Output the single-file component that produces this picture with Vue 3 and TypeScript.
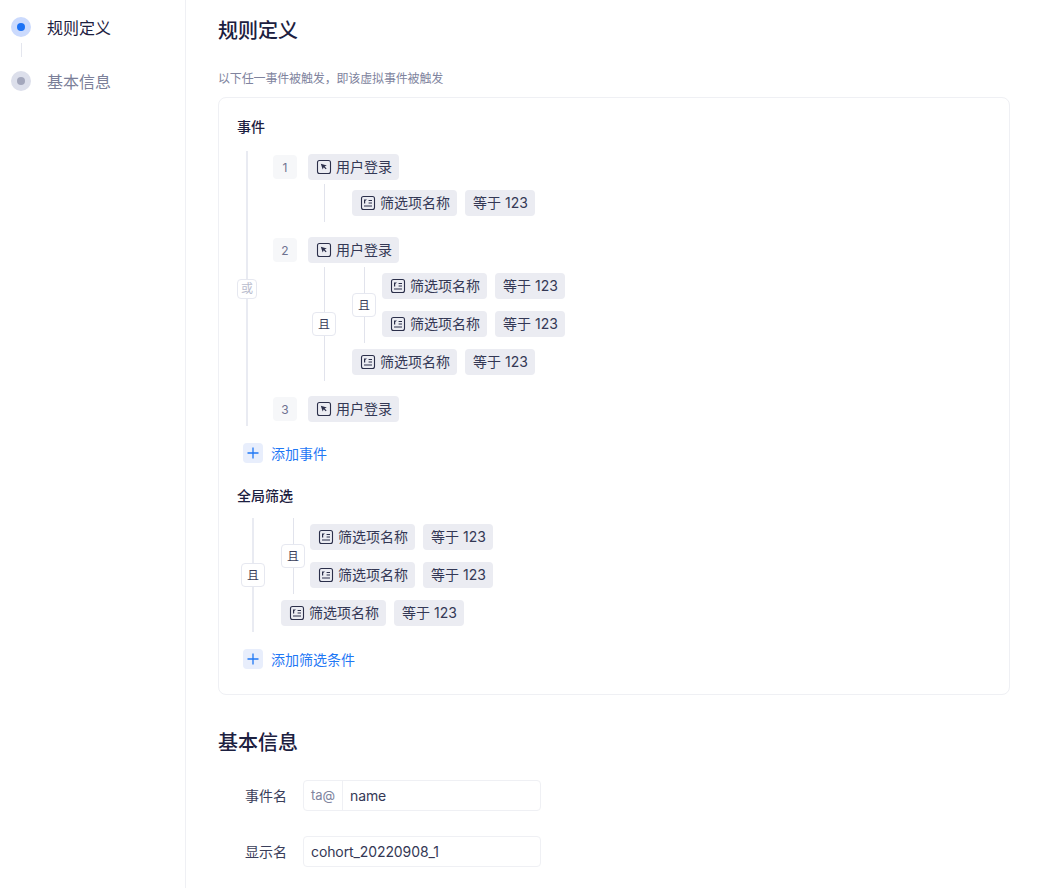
<template>
  <div class="page">
    <aside class="side">
      <div class="step active">
        <span class="step-dot"><i></i></span>
        <span class="step-label">规则定义</span>
      </div>
      <div class="step-line"></div>
      <div class="step">
        <span class="step-dot"><i></i></span>
        <span class="step-label">基本信息</span>
      </div>
    </aside>

    <main class="main">
      <h2 class="title">规则定义</h2>
      <p class="desc">以下任一事件被触发，即该虚拟事件被触发</p>

      <section class="card">
        <h3 class="sub-title">事件</h3>

        <div class="tree events">
          <div class="rail rail-or">
            <span class="line"></span>
            <span class="badge badge-or">或</span>
            <span class="line"></span>
          </div>
          <div class="event-list">
            <!-- 事件 1 -->
            <div class="event">
              <div class="event-head">
                <span class="num">1</span>
                <span class="chip">
                  <svg class="ico" viewBox="0 0 16 16"><rect x="1.5" y="1.5" width="13" height="13" rx="2" fill="none" stroke="currentColor" stroke-width="1.1" /><path d="M4.8 4.8l6 1.6-2.2 1 2 2-.9.9-2-2-1 2.2z" fill="currentColor" /></svg>
                  用户登录
                </span>
              </div>
              <div class="tree conds">
                <div class="rail"><span class="line"></span></div>
                <div class="cond-list">
                  <div class="cond">
                    <span class="chip">
                      <svg class="ico" viewBox="0 0 16 16"><rect x="1.5" y="1.5" width="13" height="13" rx="2" fill="none" stroke="currentColor" stroke-width="1.1" /><path d="M4 4.5h3L5.2 6v2.5H4z" fill="currentColor" /><path d="M8.6 5.5H12M8.6 8H12M4 11H12" stroke="currentColor" /></svg>
                      筛选项名称
                    </span>
                    <span class="chip">等于 123</span>
                  </div>
                </div>
              </div>
            </div>

            <!-- 事件 2 -->
            <div class="event">
              <div class="event-head">
                <span class="num">2</span>
                <span class="chip">
                  <svg class="ico" viewBox="0 0 16 16"><rect x="1.5" y="1.5" width="13" height="13" rx="2" fill="none" stroke="currentColor" stroke-width="1.1" /><path d="M4.8 4.8l6 1.6-2.2 1 2 2-.9.9-2-2-1 2.2z" fill="currentColor" /></svg>
                  用户登录
                </span>
              </div>
              <div class="tree conds">
                <div class="rail">
                  <span class="line"></span>
                  <span class="badge">且</span>
                  <span class="line"></span>
                </div>
                <div class="cond-list">
                  <div class="tree nested">
                    <div class="rail">
                      <span class="line"></span>
                      <span class="badge">且</span>
                      <span class="line"></span>
                    </div>
                    <div class="cond-list">
                      <div v-for="n in 2" :key="n" class="cond">
                        <span class="chip">
                          <svg class="ico" viewBox="0 0 16 16"><rect x="1.5" y="1.5" width="13" height="13" rx="2" fill="none" stroke="currentColor" stroke-width="1.1" /><path d="M4 4.5h3L5.2 6v2.5H4z" fill="currentColor" /><path d="M8.6 5.5H12M8.6 8H12M4 11H12" stroke="currentColor" /></svg>
                          筛选项名称
                        </span>
                        <span class="chip">等于 123</span>
                      </div>
                    </div>
                  </div>
                  <div class="cond">
                    <span class="chip">
                      <svg class="ico" viewBox="0 0 16 16"><rect x="1.5" y="1.5" width="13" height="13" rx="2" fill="none" stroke="currentColor" stroke-width="1.1" /><path d="M4 4.5h3L5.2 6v2.5H4z" fill="currentColor" /><path d="M8.6 5.5H12M8.6 8H12M4 11H12" stroke="currentColor" /></svg>
                      筛选项名称
                    </span>
                    <span class="chip">等于 123</span>
                  </div>
                </div>
              </div>
            </div>

            <!-- 事件 3 -->
            <div class="event">
              <div class="event-head">
                <span class="num">3</span>
                <span class="chip">
                  <svg class="ico" viewBox="0 0 16 16"><rect x="1.5" y="1.5" width="13" height="13" rx="2" fill="none" stroke="currentColor" stroke-width="1.1" /><path d="M4.8 4.8l6 1.6-2.2 1 2 2-.9.9-2-2-1 2.2z" fill="currentColor" /></svg>
                  用户登录
                </span>
              </div>
            </div>
          </div>
        </div>

        <div class="add">
          <span class="add-ico"><svg viewBox="0 0 20 20" width="20" height="20"><path d="M10 4.5v11M4.5 10h11" stroke="currentColor" stroke-width="1.3" /></svg></span>
          添加事件
        </div>

        <h3 class="sub-title global-title">全局筛选</h3>

        <div class="tree global">
          <div class="rail">
            <span class="line"></span>
            <span class="badge">且</span>
            <span class="line"></span>
          </div>
          <div class="cond-list">
            <div class="tree nested">
              <div class="rail">
                <span class="line"></span>
                <span class="badge">且</span>
                <span class="line"></span>
              </div>
              <div class="cond-list">
                <div v-for="n in 2" :key="n" class="cond">
                  <span class="chip">
                    <svg class="ico" viewBox="0 0 16 16"><rect x="1.5" y="1.5" width="13" height="13" rx="2" fill="none" stroke="currentColor" stroke-width="1.1" /><path d="M4 4.5h3L5.2 6v2.5H4z" fill="currentColor" /><path d="M8.6 5.5H12M8.6 8H12M4 11H12" stroke="currentColor" /></svg>
                    筛选项名称
                  </span>
                  <span class="chip">等于 123</span>
                </div>
              </div>
            </div>
            <div class="cond">
              <span class="chip">
                <svg class="ico" viewBox="0 0 16 16"><rect x="1.5" y="1.5" width="13" height="13" rx="2" fill="none" stroke="currentColor" stroke-width="1.1" /><path d="M4 4.5h3L5.2 6v2.5H4z" fill="currentColor" /><path d="M8.6 5.5H12M8.6 8H12M4 11H12" stroke="currentColor" /></svg>
                筛选项名称
              </span>
              <span class="chip">等于 123</span>
            </div>
          </div>
        </div>

        <div class="add add-global">
          <span class="add-ico"><svg viewBox="0 0 20 20" width="20" height="20"><path d="M10 4.5v11M4.5 10h11" stroke="currentColor" stroke-width="1.3" /></svg></span>
          添加筛选条件
        </div>
      </section>

      <h2 class="title info-title">基本信息</h2>

      <div class="form-row">
        <label class="form-label">事件名</label>
        <div class="input">
          <span class="prefix">ta@</span>
          <span class="value">name</span>
        </div>
      </div>
      <div class="form-row">
        <label class="form-label">显示名</label>
        <div class="input">
          <span class="value">cohort_20220908_1</span>
        </div>
      </div>
    </main>
  </div>
</template>

<script setup lang="ts">
</script>

<style>
html,
body {
  background: #fff;
  overflow: hidden;
}
</style>

<style scoped>
.page {
  display: flex;
  width: 1037px;
  height: 888px;
  overflow: hidden;
  font-family: Inter, "Noto Sans CJK SC", sans-serif;
  font-size: 14px;
  color: #343855;
}

/* 左侧步骤条 */
.side {
  flex: none;
  box-sizing: border-box;
  width: 186px;
  padding: 17px 0 0 11px;
  border-right: 1px solid #eff0f4;
}

.step {
  display: flex;
  align-items: center;
  gap: 16px;
  height: 20px;
  color: #7b7f99;
  font-size: 16px;
}

.step.active {
  color: #1c2040;
}

.step-dot {
  display: flex;
  align-items: center;
  justify-content: center;
  width: 20px;
  height: 20px;
  border-radius: 50%;
  background: #dcdfeb;
}

.step-dot i {
  width: 8px;
  height: 8px;
  border-radius: 50%;
  background: #a3a7bc;
}

.active .step-dot {
  background: #cbdafd;
}

.active .step-dot i {
  background: #1c72f5;
}

.step-line {
  width: 1px;
  height: 14px;
  margin: 6px 0 14px 10px;
  background: #e4e6ee;
}

/* 主体 */
.main {
  flex: 1;
  min-width: 0;
  padding: 0 27px 0 32px;
}

.title {
  margin: 0;
  padding-top: 17px;
  font-size: 20px;
  line-height: 28px;
  font-weight: 500;
  color: #1c2040;
}

.desc {
  margin: 25px 0 0;
  font-size: 12px;
  line-height: 18px;
  letter-spacing: -0.15px;
  color: #80849e;
}

.card {
  box-sizing: border-box;
  height: 598px;
  margin-top: 9px;
  padding: 18px 18px 0;
  border: 1px solid #eff0f4;
  border-radius: 8px;
}

.sub-title {
  margin: 0;
  font-size: 14px;
  line-height: 22px;
  font-weight: 500;
  color: #1c2040;
}

.tree {
  display: flex;
}

.rail {
  flex: none;
  display: flex;
  flex-direction: column;
  align-items: center;
  width: 24px;
}

.line {
  flex: 1;
  width: 1px;
  background: #e1e3ec;
}

/* 最外层的竖线更粗更浅 */
.events > .rail > .line,
.global > .rail > .line {
  width: 2px;
  background: #e9ebf2;
}

.badge {
  flex: none;
  display: flex;
  align-items: center;
  justify-content: center;
  box-sizing: border-box;
  width: 24px;
  height: 24px;
  padding-bottom: 2px;
  border: 1px solid #e6e8f0;
  border-radius: 4px;
  background: #fff;
  font-size: 12px;
  color: #3a3e5a;
}

.rail-or {
  width: 20px;
}

.badge-or {
  width: 20px;
  height: 20px;
  color: #b9bccd;
}

.events {
  margin-top: 13px;
}

.event-list {
  display: flex;
  flex-direction: column;
  gap: 15px;
  margin-left: 16px;
  padding: 3px 0 4px;
}

.event-head {
  display: flex;
  align-items: center;
  gap: 11px;
}

.num {
  display: flex;
  align-items: center;
  justify-content: center;
  width: 24px;
  height: 24px;
  border-radius: 4px;
  background: #f6f7f9;
  font-size: 12px;
  color: #6e7290;
}

.chip {
  display: inline-flex;
  align-items: center;
  gap: 4px;
  box-sizing: border-box;
  height: 26px;
  padding: 0 7px 2px 8px;
  border-radius: 4px;
  background: #ebecf2;
  white-space: nowrap;
}

.ico {
  flex: none;
  width: 16px;
  height: 16px;
  margin-bottom: -2px;
  color: #2b2f4a;
}

.conds {
  margin: 4px 0 0 39px;
}

.conds > .rail {
  margin-right: 16px;
}

.nested > .rail {
  margin-right: 6px;
}

.global .nested > .rail {
  margin-right: 5px;
}

.cond-list {
  display: flex;
  flex-direction: column;
  gap: 12px;
  padding: 6px 0;
}

.tree .tree.nested {
  margin-top: -6px;
  margin-bottom: -6px;
}

.cond {
  display: flex;
  gap: 8px;
}

.add {
  display: flex;
  align-items: center;
  gap: 8px;
  height: 20px;
  margin: 17px 0 0 6px;
  color: #1f78f5;
}

.add-ico {
  display: block;
  width: 20px;
  height: 20px;
  border-radius: 4px;
  background: #e8eefc;
}

.add-ico svg {
  display: block;
}

.global-title {
  margin-top: 22px;
}

.global {
  margin: 11px 0 0 4px;
}

.global > .rail {
  margin-right: 16px;
}

.add-global {
  margin-top: 17px;
}

.info-title {
  padding-top: 34px;
}

.form-row {
  display: flex;
  align-items: center;
  gap: 16px;
  height: 31px;
  margin-top: 25px;
}

.info-title + .form-row {
  margin-top: 23px;
}

.form-label {
  width: 69px;
  padding-bottom: 2px;
  text-align: right;
  color: #3a3e5a;
}

.input {
  display: flex;
  align-items: stretch;
  box-sizing: border-box;
  width: 238px;
  height: 31px;
  border: 1px solid #eff0f4;
  border-radius: 4px;
  line-height: 29px;
}

.prefix {
  box-sizing: border-box;
  width: 39px;
  padding-left: 7px;
  font-size: 13px;
  border-right: 1px solid #eff0f4;
  color: #80849e;
}

.value {
  padding: 0 7px;
  letter-spacing: -0.1px;
}
</style>
